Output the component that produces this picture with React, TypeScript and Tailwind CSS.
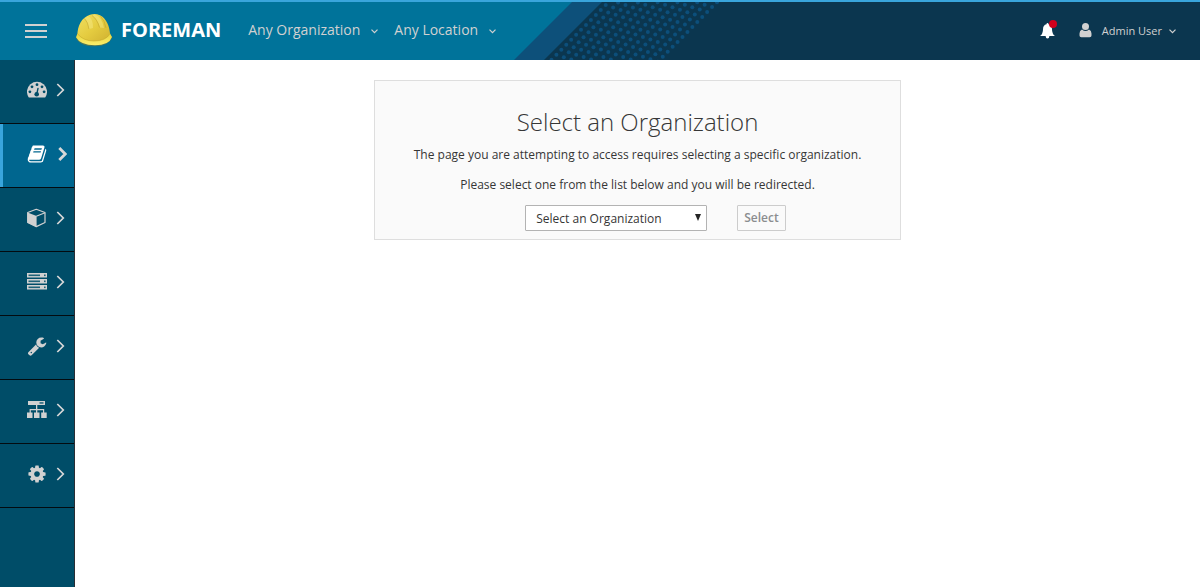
import { useState } from 'react';
import type { ReactNode } from 'react';

const Chevron = () => (
  <svg width="7" height="5" viewBox="0 0 7 5" fill="none" stroke="currentColor" strokeWidth="1.2" aria-hidden="true">
    <path d="M.5 .7 3.5 3.7 6.5 .7" />
  </svg>
);

const Glyph = ({ d, className }: { d: string; className?: string }) => (
  <svg viewBox="0 0 1792 1792" fill="currentColor" className={className} aria-hidden="true">
    <path d={d} />
  </svg>
);

const BOOK =
  'M1703 478q40 57 18 129l-275 906q-19 64-76.5 107.5t-122.5 43.5h-923q-77 0-148.5-53.5t-99.5-131.5q-24-67-2-127 0-4 3-27t4-37q1-8-3-21.5t-3-19.5q2-11 8-21t16.5-23.5 16.5-23.5q23-38 45-91.5t30-91.5q3-10 .5-30t-.5-28q3-11 17-28t17-23q21-36 42-92t25-90q1-9-2.5-32t.5-28q4-13 22-30.5t22-22.5q19-26 42.5-84.5t27.5-96.5q1-8-3-25.5t-2-26.5q2-8 9-18t18-23 17-21q8-12 16.5-30.5t15-35 16-36 19.5-32 26.5-23.5 36-11.5 47.5 5.5l-1 3q38-9 51-9h761q74 0 114 56t18 130l-274 906q-36 119-71.5 153.5t-128.5 34.5h-869q-27 0-38 15-11 16-1 43 24 70 144 70h923q29 0 56-15.5t35-41.5l300-987q7-22 5-57 38 15 59 43zm-1064 2q-4 13 2 22.5t20 9.5h608q13 0 25.5-9.5t16.5-22.5l21-64q4-13-2-22.5t-20-9.5h-608q-13 0-25.5 9.5t-16.5 22.5zm-83 256q-4 13 2 22.5t20 9.5h608q13 0 25.5-9.5t16.5-22.5l21-64q4-13-2-22.5t-20-9.5h-608q-13 0-25.5 9.5t-16.5 22.5z';
const WRENCH =
  'M448 1472q0-26-19-45t-45-19-45 19-19 45 19 45 45 19 45-19 19-45zm644-420l-682 682q-37 37-90 37-52 0-91-37l-106-108q-38-36-38-90 0-53 38-91l681-681q39 98 114.5 173.5t173.5 114.5zm634-435q0 39-23 106-47 134-164.5 217.5t-258.5 83.5q-185 0-316.5-131.5t-131.5-316.5 131.5-316.5 316.5-131.5q58 0 121.5 16.5t107.5 46.5q16 11 16 28t-16 28l-293 169v224l193 107q5-3 79-48.5t135.5-81 70.5-35.5q15 0 23.5 10t8.5 25z';
const COG =
  'M1152 896q0-106-75-181t-181-75-181 75-75 181 75 181 181 75 181-75 75-181zm512-109v222q0 12-8 23t-20 13l-185 28q-19 54-39 91 35 50 107 138 10 12 10 25t-9 23q-27 37-99 108t-94 71q-12 0-26-9l-138-108q-44 23-91 38-16 136-29 186-7 28-36 28h-222q-14 0-24.5-8.5t-11.5-21.5l-28-184q-49-16-90-37l-141 107q-10 9-25 9-14 0-25-11-126-114-165-168-7-10-7-23 0-12 8-23 15-21 51-66.5t54-70.5q-27-50-41-99l-183-27q-13-2-21-12.5t-8-23.5v-222q0-12 8-23t19-13l186-28q14-46 39-92-40-57-107-138-10-12-10-24 0-10 9-23 26-36 98.5-107.5t94.5-71.5q13 0 26 10l138 107q44-23 91-38 16-136 29-186 7-28 36-28h222q14 0 24.5 8.5t11.5 21.5l28 184q49 16 90 37l142-107q9-9 24-9 13 0 25 10 129 119 165 170 7 8 7 22 0 12-8 23-15 21-51 66.5t-54 70.5q26 50 41 98l183 28q13 2 21 12.5t8 23.5z';

const Gauge = () => (
  <svg width="20" height="20" viewBox="0 0 20 20" aria-hidden="true">
    <path d="M1.6 17.2A10 10 0 1 1 18.4 17.2Q18 17.6 17.4 17.6H2.6Q2 17.6 1.6 17.2Z" fill="currentColor" />
    <g fill="#004d68">
      <circle cx="2.9" cy="11.8" r="1.4" />
      <circle cx="5" cy="6.8" r="1.4" />
      <circle cx="10" cy="4.7" r="1.4" />
      <circle cx="15" cy="6.8" r="1.4" />
      <circle cx="17.1" cy="11.8" r="1.4" />
      <circle cx="9.7" cy="14.2" r="2.3" />
    </g>
    <path d="m9.8 14 1.2-5.6" stroke="#004d68" strokeWidth="1.4" strokeLinecap="round" />
  </svg>
);

const Cube = () => (
  <svg width="20" height="20" viewBox="0 0 20 20" strokeLinejoin="round" aria-hidden="true">
    <path d="M9.3 1.3 18 4.5v10L9.3 18.6.7 14.5v-10z" fill="none" stroke="currentColor" strokeWidth="1.2" />
    <path d="M9.3 8.2 18 4.8" stroke="currentColor" strokeWidth="1.2" />
    <path d="M.5 4.6 9.6 8.1v10.8L.5 14.7z" fill="currentColor" />
  </svg>
);

const Servers = () => (
  <svg width="20" height="20" viewBox="0 0 20 20" aria-hidden="true">
    {[1, 7, 13].map((y) => (
      <g key={y}>
        <rect y={y} width="20" height="4.5" fill="currentColor" />
        <rect x="1.5" y={y + 1.5} width="11.5" height="1.6" fill="#1f6379" />
        <rect x="17" y={y + 1.5} width="1.6" height="1.6" fill="#1f6379" />
      </g>
    ))}
  </svg>
);

const Topology = () => (
  <svg width="20" height="20" viewBox="0 0 20 20" fill="currentColor" aria-hidden="true">
    <rect x="1" y="1" width="17" height="4" />
    <rect x="12.5" y="2.2" width="4" height="1.5" fill="#1f6379" />
    <path d="M9 5h1.3v4h6.9v4h-1.2v-2.8H10.3V13H9v-2.8H3.8V13H2.6V9H9z" />
    <rect y="12.5" width="5.5" height="5.5" />
    <rect x="7" y="12.5" width="5.5" height="5.5" />
    <rect x="14.2" y="12.5" width="5.5" height="5.5" />
  </svg>
);

const Helmet = () => (
  <svg width="38" height="34" viewBox="0 0 38 34" aria-hidden="true">
    <defs>
      <linearGradient id="dome" x1="0" y1="0" x2="1" y2="1">
        <stop offset="0" stopColor="#f0df62" />
        <stop offset=".5" stopColor="#e5cc40" />
        <stop offset="1" stopColor="#cfb030" />
      </linearGradient>
      <linearGradient id="brim" x1="0" y1="0" x2="0" y2="1">
        <stop offset="0" stopColor="#e8d23c" />
        <stop offset="1" stopColor="#fbef6c" />
      </linearGradient>
    </defs>
    <path d="M1 24.5Q4 33.5 20 33.3 34 33 37.3 24.500L33 22H4z" fill="#7c7a32" opacity=".6" />
    <path d="M2.5 23C2 13 7 4 15 1.7Q20 .2 25 2.2C31 5 35 13 35.2 23Q29 30 19 29.5 8 29 2.500 23Z" fill="url(#dome)" />
    <path d="M13 3Q18 5 18 15L14 16Q13 8 9.5 5.5ZM20 1.5Q27 4 29 15L25 14.5Q23 6 17 2.5Z" fill="#f3e57a" opacity=".6" />
    <path d="M9.5 5.5Q13 9 14 16M17 2.5Q22 6 24.5 14.500M25.5 3Q30 8 31 15" fill="none" stroke="#b99c2b" strokeWidth=".8" opacity=".6" />
    <path d="M2.5 20.5Q8 28 19 28 31 28 35 20.500L37 24Q34 32.3 20 32.3 5 32 1 24.300Z" fill="url(#brim)" />
    <path d="M2.5 20.7Q8 28 19 28 31 28 35 20.700" fill="none" stroke="#bd9f25" strokeWidth=".7" opacity=".7" />
  </svg>
);

// Dots run on a slanted grid: 12 diagonals, each going down to the left
const dots = Array.from({ length: 12 }, (_, col) =>
  Array.from({ length: 24 }, (_, row) => ({
    x: 605.7 + col * 7.43 - (row - 8) * 4.93,
    y: 3 + col * 2.45 + (row - 8) * 4.97,
  })),
)
  .flat()
  .filter((dot) => dot.y > -2 && dot.y < 60);

const MastheadArt = () => (
  <svg width="740" height="58" viewBox="0 0 740 58" className="pointer-events-none absolute left-0 top-0" aria-hidden="true">
    <path d="M0 0h602l-58 58H0z" fill="#0d507a" />
    <path d="M0 0h572l-58 58H0z" fill="#00739a" />
    {dots.map((dot, i) => (
      <circle key={i} cx={dot.x} cy={dot.y} r="2" fill="#0c4f7b" />
    ))}
  </svg>
);

type NavItem = { label: string; icon: ReactNode; active?: boolean };

const navItems: NavItem[] = [
  { label: 'Monitor', icon: <Gauge /> },
  { label: 'Content', icon: <Glyph d={BOOK} className="size-5" />, active: true },
  { label: 'Containers', icon: <Cube /> },
  { label: 'Hosts', icon: <Servers /> },
  { label: 'Configure', icon: <Glyph d={WRENCH} className="size-5" /> },
  { label: 'Infrastructure', icon: <Topology /> },
  { label: 'Administer', icon: <Glyph d={COG} className="size-5" /> },
];

function Masthead() {
  return (
    <header className="relative border-t-2 border-[#39a5dc] bg-[#0b364f] text-[#d1d1d1]">
      <MastheadArt />
      <div className="relative flex h-[58px] items-center px-6">
        <button type="button" aria-label="Toggle navigation" className="flex w-6 flex-col items-center gap-1">
          <span className="h-[2px] w-[22px] bg-current" />
          <span className="h-[2px] w-[22px] bg-current" />
          <span className="h-[2px] w-[22px] bg-current" />
        </button>
        <a href="#" className="ml-[27px] flex items-center gap-2 pb-[2px] text-xl font-bold text-white">
          <Helmet />
          FOREMAN
        </a>
        <nav className="ml-[27px] flex items-center gap-4 pb-[2px] text-sm" aria-label="Context">
          <button type="button" className="flex items-center gap-[11px]">
            Any Organization
            <span className="pt-[2px]">
              <Chevron />
            </span>
          </button>
          <button type="button" className="flex items-center gap-[11px]">
            Any Location
            <span className="pt-[2px]">
              <Chevron />
            </span>
          </button>
        </nav>
        <div className="ml-auto flex items-center">
          <button type="button" aria-label="Notifications" className="relative text-white">
            <svg width="15" height="16" viewBox="0 0 15 16" fill="currentColor" aria-hidden="true">
              <path d="M7.5 0Q8.5 0 8.5 1.2 12 2 12 6.2 12 11 15 13H9.4Q9.2 15.5 7.5 15.5T5.6 13H0Q3 11 3 6.2 3 2 6.5 1.2 6.5 0 7.5 0Z" />
            </svg>
            <span className="absolute -right-[2px] -top-[3px] size-2 rounded-full bg-[#d1001c]" />
          </button>
          <button type="button" className="ml-6 flex items-center text-[11px]">
            <span className="pb-[2px]">
              <svg width="13" height="15" viewBox="0 0 13 15" fill="currentColor" aria-hidden="true">
                <circle cx="6.5" cy="3.6" r="3.5" />
                <path d="M3 6.500Q6.5 9.5 10 6.5 12.5 7.3 12.5 10.5V12.5Q12.5 14.2 10.7 14.2H2.300Q.5 14.2 .5 12.5V10.5Q.5 7.3 3 6.5Z" />
              </svg>
            </span>
            <span className="ml-[10px] mr-[7px]">Admin User</span>
            <Chevron />
          </button>
        </div>
      </div>
    </header>
  );
}

function Sidebar() {
  return (
    <nav className="w-[75px] shrink-0 border-r border-[#292e34] bg-[#004d68]" aria-label="Main">
      <ul>
        {navItems.map((item) => (
          <li key={item.label} className="border-b border-[#030b10]">
            <a
              href="#"
              aria-label={item.label}
              className={
                item.active
                  ? 'flex h-[63px] items-center justify-between border-l-[3px] border-[#39a5dc] bg-[#00668f] pb-1 pl-6 pr-[7px] text-white'
                  : 'flex h-[63px] items-center justify-between pb-1 pl-[27px] pr-[9px] text-[#d1d1d1]'
              }
            >
              {item.icon}
              <svg
                width="9"
                height="14"
                viewBox="0 0 9 14"
                fill="none"
                stroke="#d8d8d8"
                strokeWidth={item.active ? 2.8 : 1.7}
                aria-hidden="true"
              >
                <path d="M1.3 1 7.3 7 1.3 13" />
              </svg>
            </a>
          </li>
        ))}
      </ul>
    </nav>
  );
}

export default function App() {
  const [organization, setOrganization] = useState('');

  return (
    <div className="flex min-h-screen flex-col bg-white font-['Open_Sans',sans-serif] text-xs text-[#363636]">
      <Masthead />
      <div className="flex flex-1">
        <Sidebar />
        <main className="flex-1 p-5">
          <section className="mx-auto w-full max-w-[527px] border border-[#dedede] bg-[#fafafa] px-5 pb-2 pt-7 text-center">
            <h1 className="mb-[10px] text-2xl/[26px] font-light">Select an Organization</h1>
            <p className="mb-[10px] leading-5">
              The page you are attempting to access requires selecting a specific organization.
            </p>
            <p className="mb-[10px] leading-5">Please select one from the list below and you will be redirected.</p>
            <form className="flex justify-center gap-[30px] pl-9" onSubmit={(e) => e.preventDefault()}>
              <div className="relative">
                <select
                  aria-label="Organization"
                  value={organization}
                  onChange={(e) => setOrganization(e.target.value)}
                  className="h-[26px] w-[182px] appearance-none rounded-[1px] border border-[#b3b3b3] bg-white pl-[10px] pr-6 pt-[2px]"
                >
                  <option value="">Select an Organization</option>
                </select>
                <svg
                  width="6"
                  height="7"
                  viewBox="0 0 6 7"
                  className="pointer-events-none absolute right-[6px] top-[9px]"
                  aria-hidden="true"
                >
                  <path d="M0 0h6L3 7z" fill="#252525" />
                </svg>
              </div>
              <button
                type="submit"
                disabled={!organization}
                className="h-[26px] rounded-[1px] border border-[#cccccc] bg-[#fafafa] px-[6px] font-semibold text-[#8b8d8f]"
              >
                Select
              </button>
            </form>
          </section>
        </main>
      </div>
    </div>
  );
}
